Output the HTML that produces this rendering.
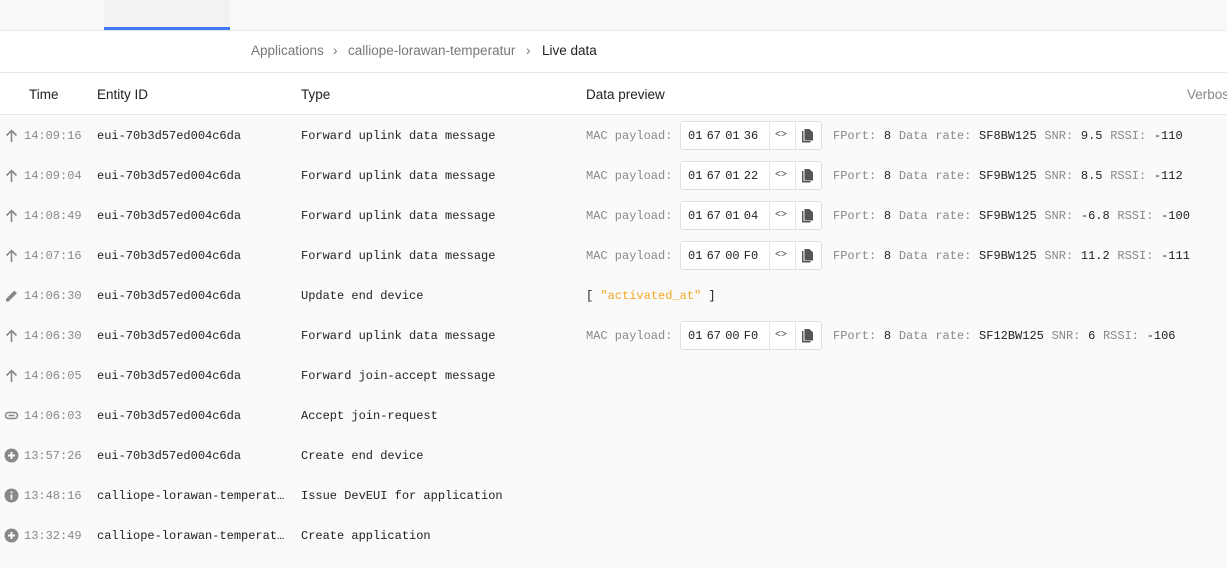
<!DOCTYPE html>
<html><head><meta charset="utf-8"><style>
*{margin:0;padding:0;box-sizing:border-box}
body{width:1227px;height:568px;overflow:hidden;background:#fafafa;font-family:"Liberation Sans",sans-serif;position:relative}
.top{position:absolute;left:0;top:0;width:1227px;height:31px;background:#f9f9f9;border-bottom:1px solid #e8e8e8}
.tab{position:absolute;left:104px;top:0;width:126px;height:30px;background:#f2f2f2}
.tab:after{content:"";position:absolute;left:0;bottom:0;width:126px;height:3px;background:#4279f4}
.bc{position:absolute;left:0;top:31px;width:1227px;height:42px;background:#fff;border-bottom:1px solid #e8e8e8;font-size:13.5px;color:#777}
.bc span{position:absolute;top:12px}
.hd{position:absolute;left:0;top:73px;width:1227px;height:42px;background:#fff;border-bottom:1px solid #e8e8e8;font-size:13.5px;color:#222}
.hd span{position:absolute;top:14px}
.row{position:absolute;left:0;width:1227px;height:40px;font-family:"Liberation Mono",monospace;font-size:12px;color:#222}
.row>*{position:absolute;top:14px;white-space:nowrap}
.t{left:24px;color:#888}
.e{left:97px}
.ty{left:301px}
.ic{left:4px;top:13px;width:15px;height:15px}
.row>svg.ic{top:13px}
.g{color:#888}
.row>.box{position:absolute;left:680px;top:6px;width:142px;height:29px;background:#fff;border:1px solid #e0e0e0;border-radius:3px}
.box .v{position:absolute;left:7px;top:7px;word-spacing:-3px}
.box .d1{position:absolute;left:88px;top:0;width:1px;height:27px;background:#e6e6e6}
.box .d2{position:absolute;left:114px;top:0;width:1px;height:27px;background:#e6e6e6}
.box .cd{position:absolute;left:94px;top:8px;font-size:10px;color:#444}
.box svg{position:absolute;left:120px;top:6px}
.m{word-spacing:0.5px}
</style></head><body>
<div class="top"><div class="tab"></div></div>
<div class="bc"><span style="left:251px">Applications</span><span style="left:333px">›</span><span style="left:348px">calliope-lorawan-temperatur</span><span style="left:526px">›</span><span style="left:542px;color:#222">Live data</span></div>
<div class="hd"><span style="left:29px">Time</span><span style="left:97px">Entity ID</span><span style="left:301px">Type</span><span style="left:586px">Data preview</span><span style="left:1187px;color:#888">Verbose</span></div>

<svg width="0" height="0" style="position:absolute"><defs>
<g id="up"><path d="M7.5 2.5V14M2.5 7.5L7.5 2.5 12.5 7.5" stroke="#888" stroke-width="1.6" fill="none"/></g>
<g id="pen"><path d="M2 13.5v-2.6l8.3-8.3 2.6 2.6-8.3 8.3z" fill="#888"/></g>
<g id="link"><rect x="1.5" y="4.5" width="12" height="6" rx="3" stroke="#888" stroke-width="1.5" fill="none"/><path d="M4.5 7.5h6" stroke="#888" stroke-width="1.5"/></g>
<g id="plus"><circle cx="7.5" cy="7.5" r="7" fill="#888"/><path d="M7.5 4v7M4 7.5h7" stroke="#fafafa" stroke-width="2"/></g>
<g id="info"><circle cx="7.5" cy="7.5" r="7" fill="#888"/><rect x="6.6" y="6.5" width="1.8" height="5" fill="#fafafa"/><circle cx="7.5" cy="4.3" r="1" fill="#fafafa"/></g>
<g id="copy"><path d="M1 3h1.5v10h7v1.5H1z" fill="#555"/><path d="M3.5 1h5l3.5 3.5v8h-8.5z" fill="#555"/></g>
</defs></svg>

<div class="row" style="top:115px"><svg class="ic"><use href="#up"/></svg><span class="t">14:09:16</span><span class="e">eui-70b3d57ed004c6da</span><span class="ty">Forward uplink data message</span><span class="g" style="left:586px">MAC payload:</span><div class="box"><span class="v">01 67 01 36</span><i class="d1"></i><span class="cd">&lt;&gt;</span><i class="d2"></i><svg width="13" height="16"><use href="#copy"/></svg></div><span class="m" style="left:833px"><span class="g">FPort:</span> 8 <span class="g">Data rate:</span> SF8BW125 <span class="g">SNR:</span> 9.5 <span class="g">RSSI:</span> -110</span></div>

<div class="row" style="top:155px"><svg class="ic"><use href="#up"/></svg><span class="t">14:09:04</span><span class="e">eui-70b3d57ed004c6da</span><span class="ty">Forward uplink data message</span><span class="g" style="left:586px">MAC payload:</span><div class="box"><span class="v">01 67 01 22</span><i class="d1"></i><span class="cd">&lt;&gt;</span><i class="d2"></i><svg width="13" height="16"><use href="#copy"/></svg></div><span class="m" style="left:833px"><span class="g">FPort:</span> 8 <span class="g">Data rate:</span> SF9BW125 <span class="g">SNR:</span> 8.5 <span class="g">RSSI:</span> -112</span></div>

<div class="row" style="top:195px"><svg class="ic"><use href="#up"/></svg><span class="t">14:08:49</span><span class="e">eui-70b3d57ed004c6da</span><span class="ty">Forward uplink data message</span><span class="g" style="left:586px">MAC payload:</span><div class="box"><span class="v">01 67 01 04</span><i class="d1"></i><span class="cd">&lt;&gt;</span><i class="d2"></i><svg width="13" height="16"><use href="#copy"/></svg></div><span class="m" style="left:833px"><span class="g">FPort:</span> 8 <span class="g">Data rate:</span> SF9BW125 <span class="g">SNR:</span> -6.8 <span class="g">RSSI:</span> -100</span></div>

<div class="row" style="top:235px"><svg class="ic"><use href="#up"/></svg><span class="t">14:07:16</span><span class="e">eui-70b3d57ed004c6da</span><span class="ty">Forward uplink data message</span><span class="g" style="left:586px">MAC payload:</span><div class="box"><span class="v">01 67 00 F0</span><i class="d1"></i><span class="cd">&lt;&gt;</span><i class="d2"></i><svg width="13" height="16"><use href="#copy"/></svg></div><span class="m" style="left:833px"><span class="g">FPort:</span> 8 <span class="g">Data rate:</span> SF9BW125 <span class="g">SNR:</span> 11.2 <span class="g">RSSI:</span> -111</span></div>

<div class="row" style="top:275px"><svg class="ic"><use href="#pen"/></svg><span class="t">14:06:30</span><span class="e">eui-70b3d57ed004c6da</span><span class="ty">Update end device</span><span style="left:586px">[ <span style="color:#f5a623">"activated_at"</span> ]</span></div>

<div class="row" style="top:315px"><svg class="ic"><use href="#up"/></svg><span class="t">14:06:30</span><span class="e">eui-70b3d57ed004c6da</span><span class="ty">Forward uplink data message</span><span class="g" style="left:586px">MAC payload:</span><div class="box"><span class="v">01 67 00 F0</span><i class="d1"></i><span class="cd">&lt;&gt;</span><i class="d2"></i><svg width="13" height="16"><use href="#copy"/></svg></div><span class="m" style="left:833px"><span class="g">FPort:</span> 8 <span class="g">Data rate:</span> SF12BW125 <span class="g">SNR:</span> 6 <span class="g">RSSI:</span> -106</span></div>

<div class="row" style="top:355px"><svg class="ic"><use href="#up"/></svg><span class="t">14:06:05</span><span class="e">eui-70b3d57ed004c6da</span><span class="ty">Forward join-accept message</span></div>
<div class="row" style="top:395px"><svg class="ic"><use href="#link"/></svg><span class="t">14:06:03</span><span class="e">eui-70b3d57ed004c6da</span><span class="ty">Accept join-request</span></div>
<div class="row" style="top:435px"><svg class="ic"><use href="#plus"/></svg><span class="t">13:57:26</span><span class="e">eui-70b3d57ed004c6da</span><span class="ty">Create end device</span></div>
<div class="row" style="top:475px"><svg class="ic"><use href="#info"/></svg><span class="t">13:48:16</span><span class="e">calliope-lorawan-temperat…</span><span class="ty">Issue DevEUI for application</span></div>
<div class="row" style="top:515px"><svg class="ic"><use href="#plus"/></svg><span class="t">13:32:49</span><span class="e">calliope-lorawan-temperat…</span><span class="ty">Create application</span></div>
</body></html>
